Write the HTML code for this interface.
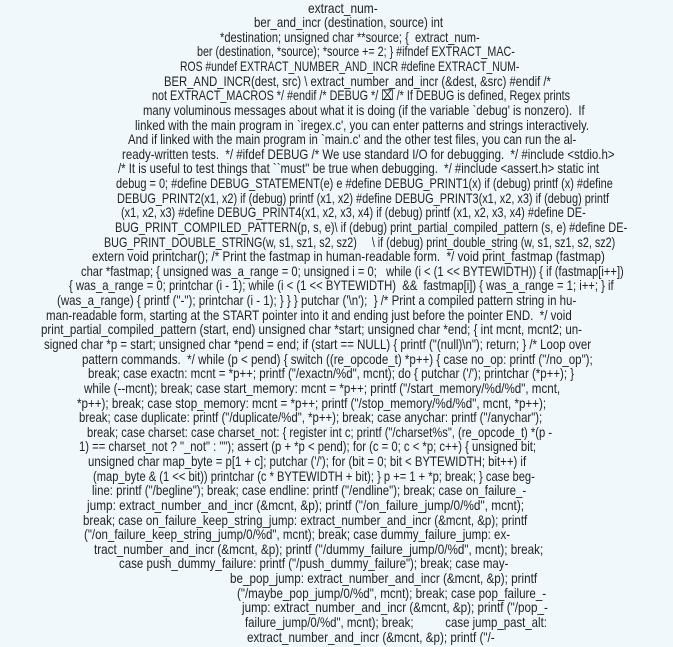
<!DOCTYPE html>
<html><head><meta charset="utf-8">
<style>
html,body{margin:0;padding:0;}
body{width:673px;height:647px;overflow:hidden;background:#f0f8fb;position:relative;}
.l{position:absolute;white-space:pre;font-family:"Liberation Sans",sans-serif;font-size:14px;line-height:15px;color:#231f20;transform-origin:0 0;}
</style></head><body>
<div id="c"></div>
<script>
var L=[
[308,378,"extract_num-"],
[254,443,"ber_and_incr (destination, source) int"],
[220,480,"*destination; unsigned char **source; {  extract_num-"],
[197,515,"ber (destination, *source); *source += 2; } #ifndef EXTRACT_MAC-"],
[180,519,"ROS #undef EXTRACT_NUMBER_AND_INCR #define EXTRACT_NUM-"],
[164,551,"BER_AND_INCR(dest, src) \\ extract_number_and_incr (&dest, &src) #endif /*"],
[152,570,"not EXTRACT_MACROS */ #endif /* DEBUG */ \u2327 /* If DEBUG is defined, Regex prints"],
[143,585,"many voluminous messages about what it is doing (if the variable `debug' is nonzero).  If"],
[135,589,"linked with the main program in `iregex.c', you can enter patterns and strings interactively."],
[128,576,"And if linked with the main program in `main.c' and the other test files, you can run the al-"],
[122,615,"ready-written tests.  */ #ifdef DEBUG /* We use standard I/O for debugging.  */ #include <stdio.h>"],
[118,599,"/* It is useful to test things that ``must'' be true when debugging.  */ #include <assert.h> static int"],
[116,613,"debug = 0; #define DEBUG_STATEMENT(e) e #define DEBUG_PRINT1(x) if (debug) printf (x) #define"],
[117,609,"DEBUG_PRINT2(x1, x2) if (debug) printf (x1, x2) #define DEBUG_PRINT3(x1, x2, x3) if (debug) printf"],
[121,586,"(x1, x2, x3) #define DEBUG_PRINT4(x1, x2, x3, x4) if (debug) printf (x1, x2, x3, x4) #define DE-"],
[115,627,"BUG_PRINT_COMPILED_PATTERN(p, s, e)\\ if (debug) print_partial_compiled_pattern (s, e) #define DE-"],
[104,615,"BUG_PRINT_DOUBLE_STRING(w, s1, sz1, s2, sz2)     \\ if (debug) print_double_string (w, s1, sz1, s2, sz2)"],
[92,605,"extern void printchar(); /* Print the fastmap in human-readable form.  */ void print_fastmap (fastmap)"],
[81,624,"char *fastmap; { unsigned was_a_range = 0; unsigned i = 0;   while (i < (1 << BYTEWIDTH)) { if (fastmap[i++])"],
[69,614,"{ was_a_range = 0; printchar (i - 1); while (i < (1 << BYTEWIDTH)  &&  fastmap[i]) { was_a_range = 1; i++; } if"],
[57,576,"(was_a_range) { printf (\"-\"); printchar (i - 1); } } } putchar ('\\n');  } /* Print a compiled pattern string in hu-"],
[46,572,"man-readable form, starting at the START pointer into it and ending just before the pointer END.  */ void"],
[41,582,"print_partial_compiled_pattern (start, end) unsigned char *start; unsigned char *end; { int mcnt, mcnt2; un-"],
[44,591,"signed char *p = start; unsigned char *pend = end; if (start == NULL) { printf (\"(null)\\n\"); return; } /* Loop over"],
[82,593,"pattern commands.  */ while (p < pend) { switch ((re_opcode_t) *p++) { case no_op: printf (\"/no_op\");"],
[88,574,"break; case exactn: mcnt = *p++; printf (\"/exactn/%d\", mcnt); do { putchar ('/'); printchar (*p++); }"],
[84,560,"while (--mcnt); break; case start_memory: mcnt = *p++; printf (\"/start_memory/%d/%d\", mcnt,"],
[77,546,"*p++); break; case stop_memory: mcnt = *p++; printf (\"/stop_memory/%d/%d\", mcnt, *p++);"],
[79,542,"break; case duplicate: printf (\"/duplicate/%d\", *p++); break; case anychar: printf (\"/anychar\");"],
[87,552,"break; case charset: case charset_not: { register int c; printf (\"/charset%s\", (re_opcode_t) *(p -"],
[79,536,"1) == charset_not ? \"_not\" : \"\"); assert (p + *p < pend); for (c = 0; c < *p; c++) { unsigned bit;"],
[88,526,"unsigned char map_byte = p[1 + c]; putchar ('/'); for (bit = 0; bit < BYTEWIDTH; bit++) if"],
[93,535,"(map_byte & (1 << bit)) printchar (c * BYTEWIDTH + bit); } p += 1 + *p; break; } case beg-"],
[92,526,"line: printf (\"/begline\"); break; case endline: printf (\"/endline\"); break; case on_failure_-"],
[87,524,"jump: extract_number_and_incr (&mcnt, &p); printf (\"/on_failure_jump/0/%d\", mcnt);"],
[83,527,"break; case on_failure_keep_string_jump: extract_number_and_incr (&mcnt, &p); printf"],
[84,510,"(\"/on_failure_keep_string_jump/0/%d\", mcnt); break; case dummy_failure_jump: ex-"],
[94,543,"tract_number_and_incr (&mcnt, &p); printf (\"/dummy_failure_jump/0/%d\", mcnt); break;"],
[119,508,"case push_dummy_failure: printf (\"/push_dummy_failure\"); break; case may-"],
[230,537,"be_pop_jump: extract_number_and_incr (&mcnt, &p); printf"],
[237,546,"(\"/maybe_pop_jump/0/%d\", mcnt); break; case pop_failure_-"],
[242,548,"jump: extract_number_and_incr (&mcnt, &p); printf (\"/pop_-"],
[245,547,"failure_jump/0/%d\", mcnt); break;          case jump_past_alt:"],
[247,495,"extract_number_and_incr (&mcnt, &p); printf (\"/-"]
];
var c=document.getElementById('c');
for(var i=0;i<L.length;i++){
 var s=document.createElement('div');s.className='l';
 s.textContent=L[i][2];
 s.style.left=L[i][0]+'px';
 s.style.top=(0.5+i*14.63)+'px';
 c.appendChild(s);
 var w=s.offsetWidth, t=L[i][1]-L[i][0];
 s.style.transform='scaleX('+(t/w)+')';
}
</script>
</body></html>
